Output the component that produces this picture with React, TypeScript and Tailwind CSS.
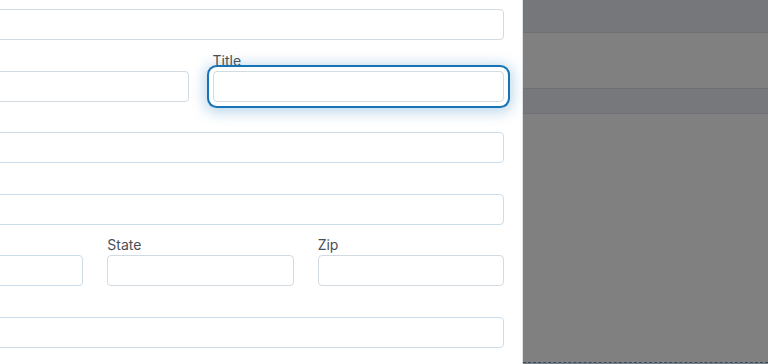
import React from 'react';

const labelCls = 'block h-[21px] text-[14px] leading-[21px] text-[#4a4f55]';
const inputCls =
  'block w-full h-[31px] rounded-[4px] border bg-white px-3 text-[14px] outline-none';

function Field({ label, tone = 'gray', focused = false }: { label?: string; tone?: 'gray' | 'blue'; focused?: boolean }) {
  const border = tone === 'blue' ? 'border-[#cadde8]' : 'border-[#d3dbe2]';
  return (
    <div className="flex flex-col">
      <label className={labelCls}>{label}</label>
      <input
        type="text"
        className={
          inputCls +
          ' ' +
          border +
          (focused
            ? ' shadow-[0_0_0_4px_#ffffff,0_0_0_6px_#1673b5,0_2px_14px_8px_rgba(22,115,181,0.3)]'
            : '')
        }
      />
    </div>
  );
}

export default function App() {
  return (
    <div className="flex h-[364px] w-[768px] overflow-hidden bg-white font-['Inter','Liberation_Sans',sans-serif]">
      {/* Form panel, scrolled so only the right part shows */}
      <div className="w-[523px] shrink-0 overflow-hidden border-r border-[#dde2e7] bg-white">
        <div className="ml-[-103px] mt-[-12px] flex w-[607px] flex-col gap-[9.6px]">
          <Field tone="gray" />
          <div className="grid grid-cols-2 gap-[24px]">
            <Field />
            <Field label="Title" focused />
          </div>
          <Field tone="blue" />
          <Field tone="blue" />
          <div className="grid grid-cols-3 gap-[24px]">
            <Field tone="blue" />
            <Field label="State" />
            <Field label="Zip" />
          </div>
          <Field tone="blue" />
        </div>
      </div>

      {/* Dimmed page behind */}
      <div className="flex flex-1 flex-col bg-[#808080]">
        <div className="h-[33px] border-b border-[#6d7174] bg-[#76777b]" />
        <div className="h-[55px]" />
        <div className="h-[26px] border-y border-[#6d7174] bg-[#77787b]" />
        <div className="flex-1 border-b border-dashed border-[#2b4c72]" />
        <div className="h-[1px]" />
      </div>
    </div>
  );
}
